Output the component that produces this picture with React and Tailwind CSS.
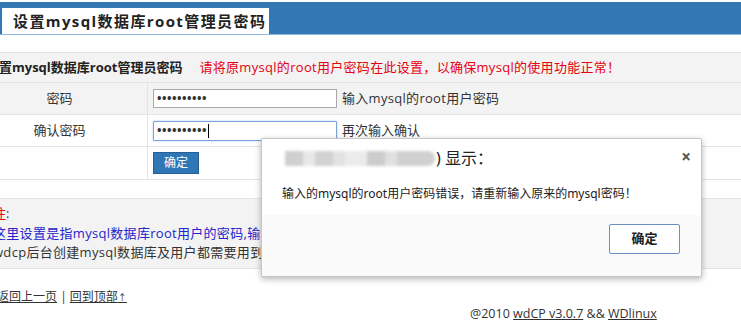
import React from "react";

const FONT = { fontFamily: '"Open Sans","Noto Sans CJK SC",sans-serif' };

export default function App() {
  return (
    <div
      className="relative w-[741px] h-[324px] overflow-hidden bg-white text-[#333] text-[13px]"
      style={FONT}
    >
      {/* top bar */}
      <div className="mt-[2px] h-[33px] bg-[#3378b4] border-b border-[#8fb8de] flex items-end pl-[2px]">
        <div className="h-[26px] w-[267px] bg-white flex items-center pl-[11px] text-[15px] font-bold tracking-[1.4px] text-[#222] leading-none whitespace-nowrap">
          设置mysql数据库root管理员密码
        </div>
      </div>

      <div className="ml-[-28px] w-[769px] mt-[17px]">
        {/* header row */}
        <div className="h-[31px] bg-[#f3f3f3] border-t border-b border-[#e4e4e4] flex items-center pl-[14px] whitespace-nowrap">
          <span className="font-bold text-[#222]">设置mysql数据库root管理员密码</span>
          <span className="ml-[17px] text-[#e60012] tracking-[0.3px]">请将原mysql的root用户密码在此设置，以确保mysql的使用功能正常！</span>
        </div>
        {/* row 1 */}
        <div className="h-[32px] bg-[#f3f3f3] border-b border-[#e4e4e4] flex">
          <div className="w-[176px] border-r border-[#e4e4e4] flex items-center justify-center">密码</div>
          <div className="flex items-center pl-[5px]">
            <div className="w-[184px] h-[19px] bg-white border border-[#a9a9a9] flex items-center pl-[3px] text-[12px] tracking-[0.5px] leading-none font-bold">••••••••••</div>
            <span className="ml-[5px] tracking-[0.3px]">输入mysql的root用户密码</span>
          </div>
        </div>
        {/* row 2 */}
        <div className="h-[32px] bg-white border-b border-[#e4e4e4] flex">
          <div className="w-[176px] border-r border-[#e4e4e4] flex items-center justify-center">确认密码</div>
          <div className="flex items-center pl-[5px]">
            <div className="w-[184px] h-[20px] bg-white border border-[#7aa3dd] rounded-[1px] shadow-[0_0_2px_#9fc0ee] flex items-center pl-[3px] text-[12px] tracking-[0.5px] leading-none font-bold">
              ••••••••••<span className="w-[1px] h-[14px] bg-black ml-[1px]" />
            </div>
            <span className="ml-[5px]">再次输入确认</span>
          </div>
        </div>
        {/* row 3 */}
        <div className="h-[33px] bg-white border-b border-[#e4e4e4] flex">
          <div className="w-[176px] border-r border-[#e4e4e4]" />
          <div className="flex items-center pl-[5px]">
            <div className="w-[46px] h-[22px] bg-[#2f76b7] border border-[#275f94] text-white flex items-center justify-center text-[12px]">确定</div>
          </div>
        </div>

        {/* notes */}
        <div className="mt-[18px] h-[71px] bg-[#f3f3f3] border-t border-b border-[#e4e4e4] pl-[21px] pt-[5px] leading-[19.5px] whitespace-nowrap">
          <div><span className="text-[#e60012]">注</span>:</div>
          <div className="text-[#2424c8] tracking-[0.3px]">这里设置是指mysql数据库root用户的密码,输入原来的mysql的root密码</div>
          <div className="tracking-[0.3px]">wdcp后台创建mysql数据库及用户都需要用到</div>
        </div>

        {/* links */}
        <div className="mt-[20px] pl-[25px] leading-[16px] whitespace-nowrap text-[12px]">
          <span className="underline">返回上一页</span>
          <span> | </span>
          <span className="underline">回到顶部<span className="text-[9px]">↑</span></span>
        </div>
        <div className="pl-[498px] leading-[16px] whitespace-nowrap text-[12.5px]">
          @2010 <span className="underline">wdCP v3.0.7</span> &amp;&amp; <span className="underline">WDlinux</span>
        </div>
      </div>

      {/* dialog */}
      <div
        className="absolute left-[261px] top-[138px] w-[441px] h-[139px] bg-white border border-[#c6c6c6] rounded-[2px] shadow-[0_2px_6px_rgba(0,0,0,0.3)] flex flex-col"
        style={{ fontFamily: '"Noto Sans","Noto Sans CJK SC",sans-serif' }}
      >
        <div className="h-[34px] relative flex items-center pl-[23px]">
          <div className="flex h-[15px] w-[150px] rounded-r-[7px] overflow-hidden blur-[1.5px] mt-[4px]">
            <div className="w-[18px] bg-[#cfcfcf]" />
            <div className="w-[12px] bg-[#e8e8e8]" />
            <div className="w-[18px] bg-[#d2d2d2]" />
            <div className="w-[12px] bg-[#e2e2e2]" />
            <div className="w-[22px] bg-[#ebebeb]" />
            <div className="w-[18px] bg-[#cccccc]" />
            <div className="w-[12px] bg-[#e0e0e0]" />
            <div className="w-[38px] bg-[#d0d0d0]" />
          </div>
          <span className="text-[16px] text-[#222] mt-[4px] ml-[1px]">) 显示：</span>
          <span className="absolute right-[10px] top-[5px] text-[#555] text-[17px] font-bold">×</span>
        </div>
        <div className="h-[42px] flex items-center pl-[20px] text-[12px] text-[#222]">
          输入的mysql的root用户密码错误，请重新输入原来的mysql密码！
        </div>
        <div className="flex-1 bg-[#fafafa] flex justify-end items-start pt-[9px] pr-[21px]">
          <div className="w-[71px] h-[30px] bg-white border border-[#6d8fc7] rounded-[2px] flex items-center justify-center text-[13px] font-bold text-[#222]">
            确定
          </div>
        </div>
      </div>
    </div>
  );
}
